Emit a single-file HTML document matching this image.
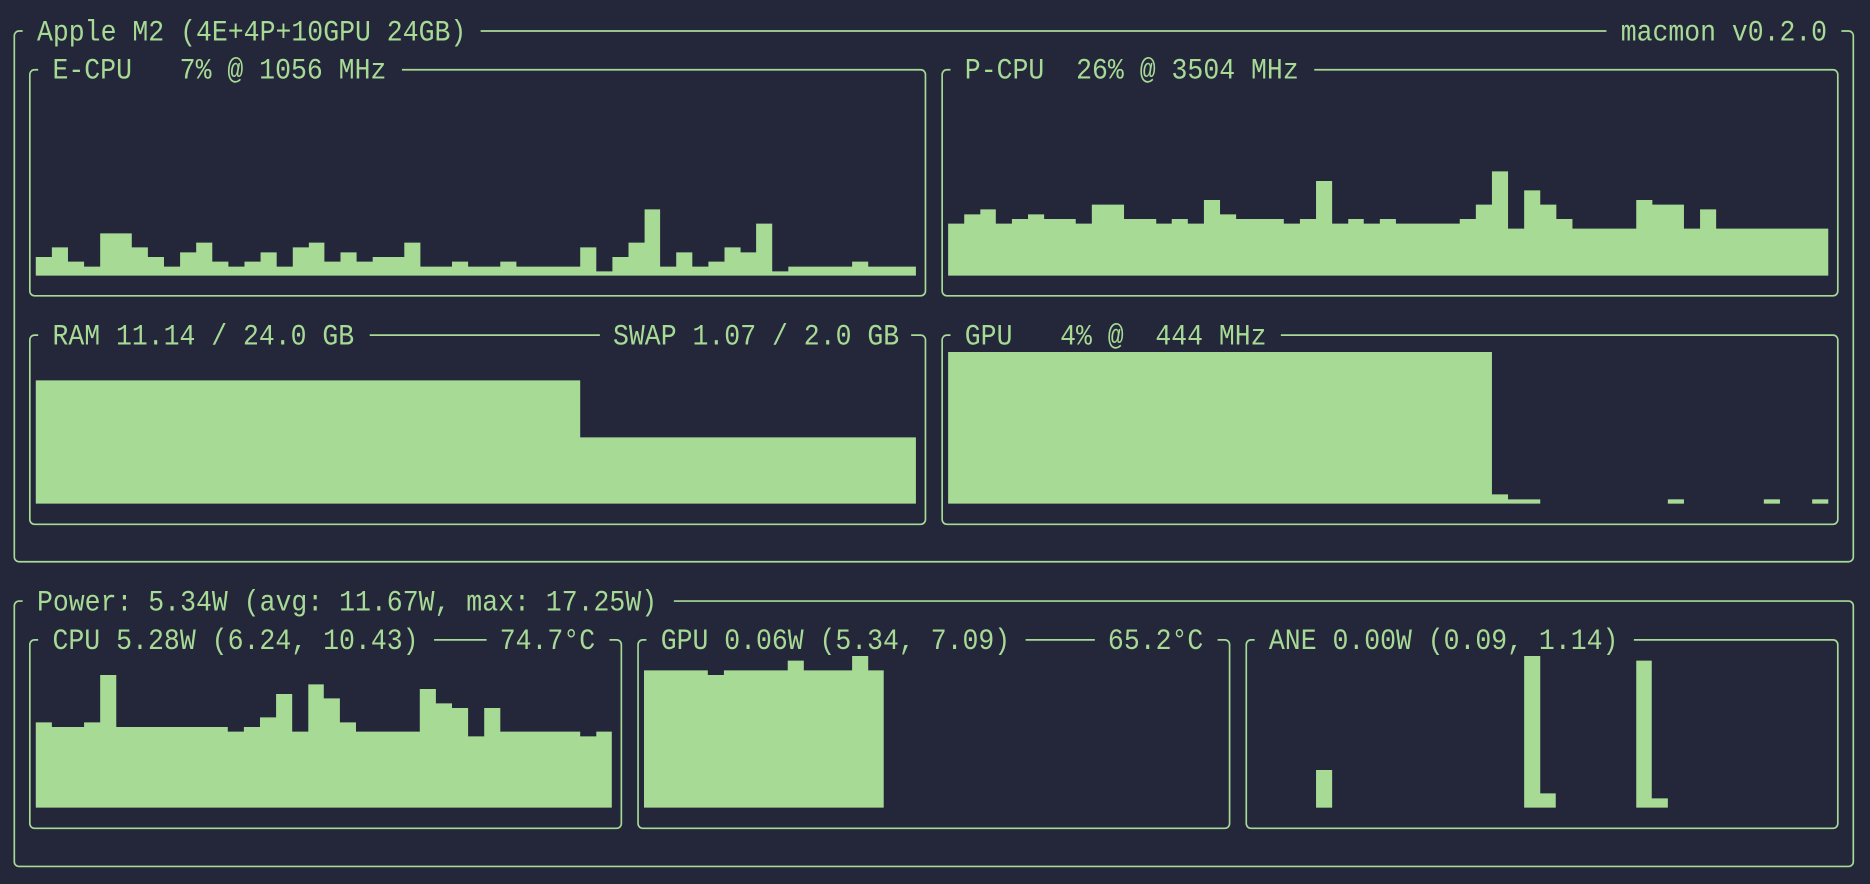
<!DOCTYPE html>
<html><head><meta charset="utf-8"><style>
html,body{margin:0;padding:0;background:#24273a;}
svg{display:block}
text{font-family:"Liberation Mono",monospace;font-size:24.5px;fill:#a6da95;white-space:pre}
</style></head><body>
<svg width="1870" height="884" viewBox="0 0 1568 741.2" preserveAspectRatio="none" xmlns="http://www.w3.org/2000/svg">
<rect width="1568" height="741.2" fill="#24273a"/>
<g fill="none" stroke="#a6da95" stroke-width="1.4">
<rect x="12" y="26" width="1542" height="445" rx="4"/>
<rect x="25" y="58.5" width="751" height="189.5" rx="4"/>
<rect x="790" y="58.5" width="751" height="189.5" rx="4"/>
<rect x="25" y="281" width="751" height="158.6" rx="4"/>
<rect x="790" y="281" width="751" height="158.6" rx="4"/>
<rect x="12" y="504" width="1542" height="222.5" rx="4"/>
<rect x="25" y="536.5" width="496" height="158" rx="4"/>
<rect x="535" y="536.5" width="496" height="158" rx="4"/>
<rect x="1045" y="536.5" width="496" height="158" rx="4"/>
</g>
<g fill="#24273a">
<rect x="19" y="18" width="384" height="16"/>
<rect x="1347" y="18" width="197" height="16"/>
<rect x="32" y="50" width="305" height="16"/>
<rect x="797" y="50" width="305" height="16"/>
<rect x="32" y="273" width="278" height="16"/>
<rect x="503" y="273" width="261" height="16"/>
<rect x="797" y="273" width="277" height="16"/>
<rect x="19" y="496" width="546" height="16"/>
<rect x="32" y="528" width="332" height="16"/>
<rect x="408" y="528" width="103" height="16"/>
<rect x="542" y="528" width="318" height="16"/>
<rect x="918" y="528" width="103" height="16"/>
<rect x="1052" y="528" width="318" height="16"/>
</g>
<text x="31" y="34" textLength="360" lengthAdjust="spacingAndGlyphs">Apple M2 (4E+4P+10GPU 24GB)</text>
<text x="1359" y="34" textLength="173" lengthAdjust="spacingAndGlyphs">macmon v0.2.0</text>
<text x="44" y="66" textLength="280" lengthAdjust="spacingAndGlyphs">E-CPU   7% @ 1056 MHz</text>
<text x="809" y="66" textLength="280" lengthAdjust="spacingAndGlyphs">P-CPU  26% @ 3504 MHz</text>
<text x="44" y="289" textLength="253" lengthAdjust="spacingAndGlyphs">RAM 11.14 / 24.0 GB</text>
<text x="514" y="289" textLength="240" lengthAdjust="spacingAndGlyphs">SWAP 1.07 / 2.0 GB</text>
<text x="809" y="289" textLength="253" lengthAdjust="spacingAndGlyphs">GPU   4% @  444 MHz</text>
<text x="31" y="512" textLength="520" lengthAdjust="spacingAndGlyphs">Power: 5.34W (avg: 11.67W, max: 17.25W)</text>
<text x="44" y="544" textLength="307" lengthAdjust="spacingAndGlyphs">CPU 5.28W (6.24, 10.43)</text>
<text x="419" y="544" textLength="80" lengthAdjust="spacingAndGlyphs">74.7°C</text>
<text x="554" y="544" textLength="293" lengthAdjust="spacingAndGlyphs">GPU 0.06W (5.34, 7.09)</text>
<text x="929" y="544" textLength="80" lengthAdjust="spacingAndGlyphs">65.2°C</text>
<text x="1064" y="544" textLength="293" lengthAdjust="spacingAndGlyphs">ANE 0.00W (0.09, 1.14)</text>
<g fill="#a6da95">
<g transform="scale(0.5,0.2795)">
<path d="M60 827 V771 H87 V742 H114 V785 H141 V800 H168 V700 H221 V742 H248 V771 H275 V800 H302 V757 H329 V728 H356 V785 H383 V800 H410 V785 H437 V757 H464 V800 H491 V742 H518 V728 H544 V785 H571 V757 H598 V785 H625 V771 H678 V728 H705 V800 H758 V785 H785 V800 H839 V785 H866 V800 H973 V742 H1000 V814 H1027 V771 H1054 V728 H1081 V628 H1107 V800 H1134 V757 H1161 V800 H1188 V785 H1215 V742 H1242 V757 H1268 V671 H1295 V814 H1322 V800 H1429 V785 H1456 V800 H1536 V827 Z"/>
</g>
<g transform="translate(784,0) scale(0.5,0.2795)">
<path d="M22 827 V671 H49 V643 H76 V628 H102 V671 H129 V657 H156 V643 H183 V657 H236 V671 H263 V614 H317 V657 H371 V671 H397 V657 H424 V671 H451 V600 H478 V643 H505 V657 H585 V671 H612 V657 H639 V543 H666 V671 H693 V657 H719 V671 H746 V657 H773 V671 H880 V657 H907 V614 H934 V514 H961 V686 H988 V571 H1015 V614 H1042 V657 H1069 V686 H1176 V600 H1203 V614 H1256 V686 H1283 V628 H1310 V686 H1498 V827 Z"/>
</g>
<g transform="translate(0,268.3) scale(0.5,0.2795)">
<path d="M60 551 V181 H973 V352 H1536 V551 Z"/>
</g>
<g transform="translate(784,268.3) scale(0.5,0.2795)">
<path d="M22 551 V96 H934 V523 H961 V538 H1015 V551 Z"/>
<rect x="1229" y="538" width="27" height="13"/>
<rect x="1390" y="538" width="27" height="13"/>
<rect x="1471" y="538" width="27" height="13"/>
</g>
<g transform="translate(0,486.3) scale(0.5,0.2795)">
<path d="M60 683 V427 H87 V441 H141 V427 H168 V285 H195 V441 H382 V455 H409 V441 H436 V412 H463 V342 H490 V455 H517 V313 H543 V355 H570 V427 H597 V455 H704 V327 H731 V370 H758 V384 H785 V469 H812 V384 H839 V455 H973 V469 H1000 V455 H1026 V683 Z"/>
<path d="M1080 683 V271 H1187 V285 H1214 V271 H1321 V242 H1348 V271 H1429 V228 H1456 V271 H1482 V683 Z"/>
</g>
<g transform="translate(784,486.3) scale(0.5,0.2795)">
<rect x="639" y="570" width="27" height="113"/>
<path d="M988 683 V228 H1015 V640 H1041 V683 Z"/>
<path d="M1176 683 V242 H1202 V655 H1229 V683 Z"/>
</g>
</g>
</svg>
</body></html>
